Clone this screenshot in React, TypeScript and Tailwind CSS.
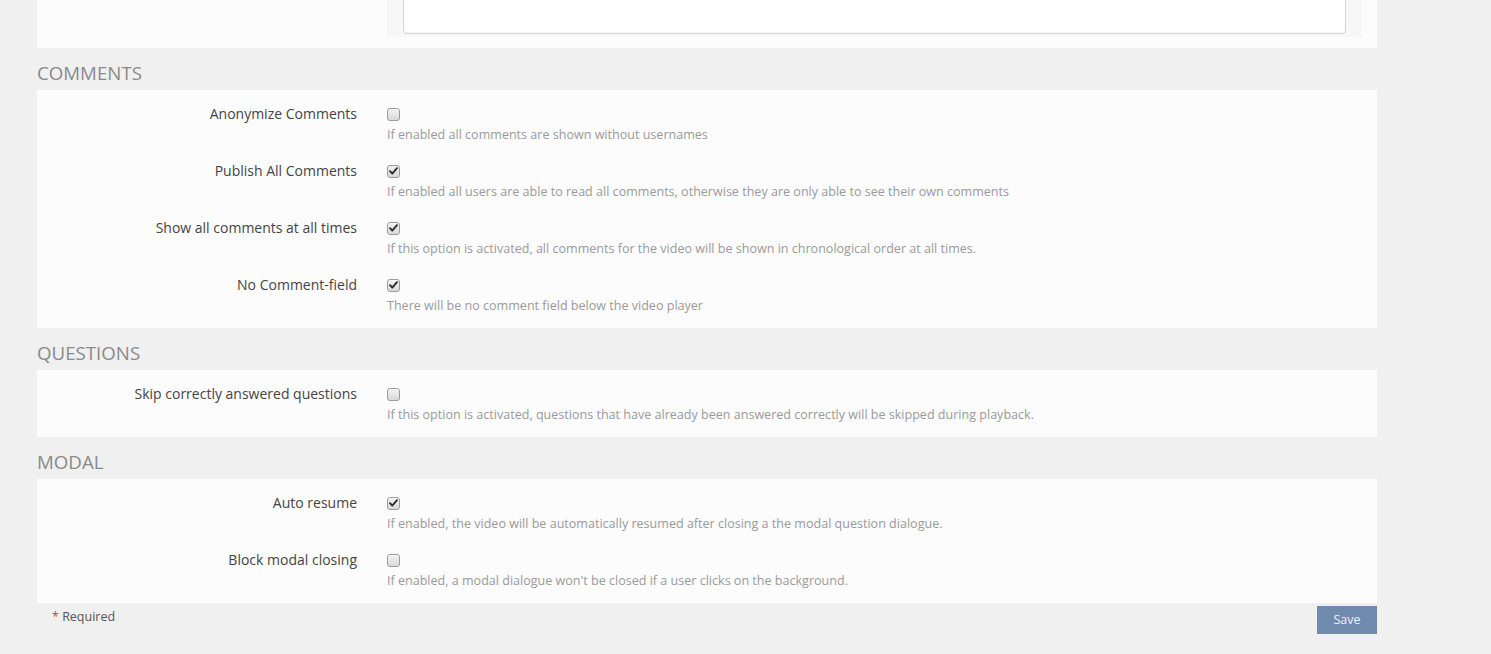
import React from "react";

type Row = { label: string; help: string; checked: boolean };

const FONT = { fontFamily: '"Open Sans", "Noto Sans", sans-serif' };

function Checkbox({ checked }: { checked: boolean }) {
  return (
    <span className="inline-flex h-[13px] w-[13px] items-center justify-center rounded-[3px] border border-[#9a9a9a] bg-gradient-to-b from-[#f2f2f2] to-[#dadada] shadow-[inset_0_1px_0_rgba(255,255,255,0.7)]">
      {checked && (
        <svg width="9" height="8" viewBox="0 0 9 8">
          <path
            d="M1 4.2 L3.3 6.6 L8 1.2"
            fill="none"
            stroke="#2e2e2e"
            strokeWidth="1.9"
            strokeLinecap="round"
            strokeLinejoin="round"
          />
        </svg>
      )}
    </span>
  );
}

function SettingRow({ row }: { row: Row }) {
  return (
    <div className="flex">
      <div className="w-[350px] shrink-0 pr-[30px] text-right text-[14px] leading-[20px] text-[#444]">
        {row.label}
      </div>
      <div className="flex flex-col">
        <div className="flex h-[20px] items-center">
          <Checkbox checked={row.checked} />
        </div>
        <div className="mt-[1px] text-[12.55px] leading-[20px] text-[#9a9a9a]">{row.help}</div>
      </div>
    </div>
  );
}

function Section({ title, rows }: { title: string; rows: Row[] }) {
  return (
    <>
      <div className="pt-[12px] pb-[4px] text-[18.7px] leading-[26px] uppercase text-[#8a8a8a]">
        {title}
      </div>
      <div className="flex flex-col gap-[16px] bg-[#fcfcfc] pt-[14px] pb-[12px]">
        {rows.map((r) => (
          <SettingRow key={r.label} row={r} />
        ))}
      </div>
    </>
  );
}

export default function App() {
  const comments: Row[] = [
    {
      label: "Anonymize Comments",
      help: "If enabled all comments are shown without usernames",
      checked: false,
    },
    {
      label: "Publish All Comments",
      help: "If enabled all users are able to read all comments, otherwise they are only able to see their own comments",
      checked: true,
    },
    {
      label: "Show all comments at all times",
      help: "If this option is activated, all comments for the video will be shown in chronological order at all times.",
      checked: true,
    },
    {
      label: "No Comment-field",
      help: "There will be no comment field below the video player",
      checked: true,
    },
  ];
  const questions: Row[] = [
    {
      label: "Skip correctly answered questions",
      help: "If this option is activated, questions that have already been answered correctly will be skipped during playback.",
      checked: false,
    },
  ];
  const modal: Row[] = [
    {
      label: "Auto resume",
      help: "If enabled, the video will be automatically resumed after closing a the modal question dialogue.",
      checked: true,
    },
    {
      label: "Block modal closing",
      help: "If enabled, a modal dialogue won't be closed if a user clicks on the background.",
      checked: false,
    },
  ];

  return (
    <div className="min-h-[654px] w-full bg-[#f0f0f0]" style={FONT}>
      <div className="ml-[37px] w-[1340px] pb-[20px]">
        <div className="flex h-[48px] bg-[#fcfcfc]">
          <div className="w-[350px] shrink-0" />
          <div className="h-[37px] w-[975px] bg-[#f7f7f7] pl-[16px]">
            <div className="h-[34px] w-[943px] rounded-b-[4px] border-x border-b border-[#d6d6d6] bg-white shadow-[inset_0_-1px_1px_rgba(0,0,0,0.04)]" />
          </div>
        </div>
        <Section title="Comments" rows={comments} />
        <Section title="Questions" rows={questions} />
        <Section title="Modal" rows={modal} />
        <div className="mt-[3px] flex items-start justify-between">
          <div className="pl-[15px] pt-[1px] text-[12.5px] leading-[20px] text-[#555]">
            <span className="text-[#e03a3a]">*</span> Required
          </div>
          <button className="h-[28px] w-[60px] bg-[#6f8aad] text-[12.5px] text-[#eef2f8]">
            Save
          </button>
        </div>
      </div>
    </div>
  );
}
